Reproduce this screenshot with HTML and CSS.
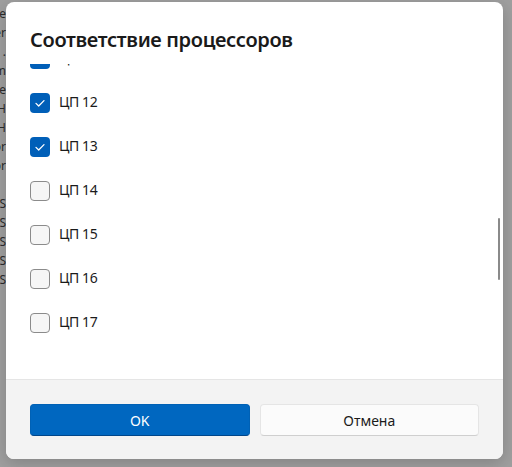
FILE: index.html
```html
<!DOCTYPE html>
<html lang="ru">
<head>
  <meta charset="UTF-8" />
  <meta name="viewport" content="width=device-width, initial-scale=1.0"/>
  <title>Соответствие процессоров</title>
  <link rel="stylesheet" href="styles.css">
</head>
<body>

  <div class="backdrop">
    <div class="bg-line"><span>Create</span></div>
    <div class="bg-line"><span>Manager</span></div>
    <div class="bg-line"><span>Updates .</span></div>
    <div class="bg-line"><span>Platform</span></div>
    <div class="bg-line"><span>Structure</span></div>
    <div class="bg-line"><span>NUMA H</span></div>
    <div class="bg-line"><span>NUMA H</span></div>
    <div class="bg-line"><span>Processor</span></div>
    <div class="bg-line"><span>Vendor</span></div>
    <div class="bg-line"><span>&nbsp;</span></div>
    <div class="bg-line"><span>SSD S</span></div>
    <div class="bg-line"><span>SSD S</span></div>
    <div class="bg-line"><span>SSD S</span></div>
    <div class="bg-line"><span>SSD S</span></div>
    <div class="bg-line"><span>SSD S</span></div>
  </div>

  <div class="dialog">
    <div class="dialog-header">
      <h2>Соответствие процессоров</h2>
    </div>

    <div class="dialog-body">
      <ul class="cpu-list">
        <li class="cpu-item"><span class="checkbox checked"><svg viewBox="0 0 20 20"><polyline points="6,10.4 8.7,13 14,7.6"/></svg></span><span class="cpu-label">ЦП 11</span></li>
        <li class="cpu-item"><span class="checkbox checked"><svg viewBox="0 0 20 20"><polyline points="6,10.4 8.7,13 14,7.6"/></svg></span><span class="cpu-label">ЦП 12</span></li>
        <li class="cpu-item"><span class="checkbox checked"><svg viewBox="0 0 20 20"><polyline points="6,10.4 8.7,13 14,7.6"/></svg></span><span class="cpu-label">ЦП 13</span></li>
        <li class="cpu-item"><span class="checkbox"></span><span class="cpu-label">ЦП 14</span></li>
        <li class="cpu-item"><span class="checkbox"></span><span class="cpu-label">ЦП 15</span></li>
        <li class="cpu-item"><span class="checkbox"></span><span class="cpu-label">ЦП 16</span></li>
        <li class="cpu-item"><span class="checkbox"></span><span class="cpu-label">ЦП 17</span></li>
      </ul>
      <div class="scroll-thumb"></div>
    </div>

    <div class="dialog-footer">
      <button class="btn btn-primary">OK</button>
      <button class="btn btn-secondary">Отмена</button>
    </div>
  </div>

</body>
</html>
```

FILE: styles.css
```css
body {
  margin: 0;
  width: 512px;
  height: 467px;
  overflow: hidden;
  background: #9f9f9f;
  font-family: 'Noto Sans', 'Open Sans', sans-serif;
}

.backdrop {
  width: 6px;
  padding-top: 4px;
  overflow: hidden;
}

.bg-line {
  display: flex;
  justify-content: flex-end;
  height: 19px;
  font-size: 12px;
  line-height: 19px;
  color: #2b2b2b;
  white-space: nowrap;
}

.dialog {
  position: absolute;
  left: 6px;
  top: 2px;
  width: 497px;
  height: 457px;
  background: #ffffff;
  border-radius: 8px;
  overflow: hidden;
  display: flex;
  flex-direction: column;
  box-shadow: 0 4px 16px rgba(0, 0, 0, 0.18);
}

.dialog-header {
  padding: 24px 24px 0;
  height: 38px;
}

.dialog-header h2 {
  margin: 0;
  font-size: 20px;
  line-height: 28px;
  font-weight: 600;
  letter-spacing: -0.35px;
  color: #1a1a1a;
}

.dialog-body {
  position: relative;
  flex: 1;
  overflow: hidden;
}

.cpu-list {
  list-style: none;
  margin: -15px 0 0;
  padding: 0 24px;
}

.cpu-item {
  display: flex;
  align-items: center;
  height: 20px;
  margin-bottom: 24px;
  font-size: 14px;
  letter-spacing: -0.4px;
  color: #1b1b1b;
}

.cpu-label {
  line-height: 18px;
  padding-bottom: 3px;
}

.checkbox {
  width: 20px;
  height: 20px;
  box-sizing: border-box;
  border-radius: 4px;
  border: 1px solid #8b8b8b;
  background: #f6f6f6;
  margin-right: 9px;
  flex-shrink: 0;
}

.checkbox.checked {
  border: none;
  background: #005fb8;
}

.checkbox svg {
  display: block;
  width: 20px;
  height: 20px;
}

.checkbox polyline {
  fill: none;
  stroke: #ffffff;
  stroke-width: 1.3;
  stroke-linecap: round;
  stroke-linejoin: round;
}

.scroll-thumb {
  position: absolute;
  left: 492px;
  top: 154px;
  width: 2px;
  height: 62px;
  border-radius: 1px;
  background: #8a8a8a;
}

.dialog-footer {
  display: flex;
  gap: 10px;
  height: 80px;
  padding: 24px 24px 0;
  box-sizing: border-box;
  background: #f3f3f3;
  border-top: 1px solid #e5e5e5;
}

.btn {
  flex: 1;
  height: 32px;
  border-radius: 4px;
  font-family: inherit;
  font-size: 14px;
  cursor: pointer;
}

.btn-primary {
  background: #0067c0;
  color: #ffffff;
  border: 1px solid #0061b5;
  border-bottom-color: #00468a;
}

.btn-secondary {
  background: #fbfbfb;
  color: #1b1b1b;
  border: 1px solid #e5e5e5;
  border-bottom-color: #cfcfcf;
}
```
